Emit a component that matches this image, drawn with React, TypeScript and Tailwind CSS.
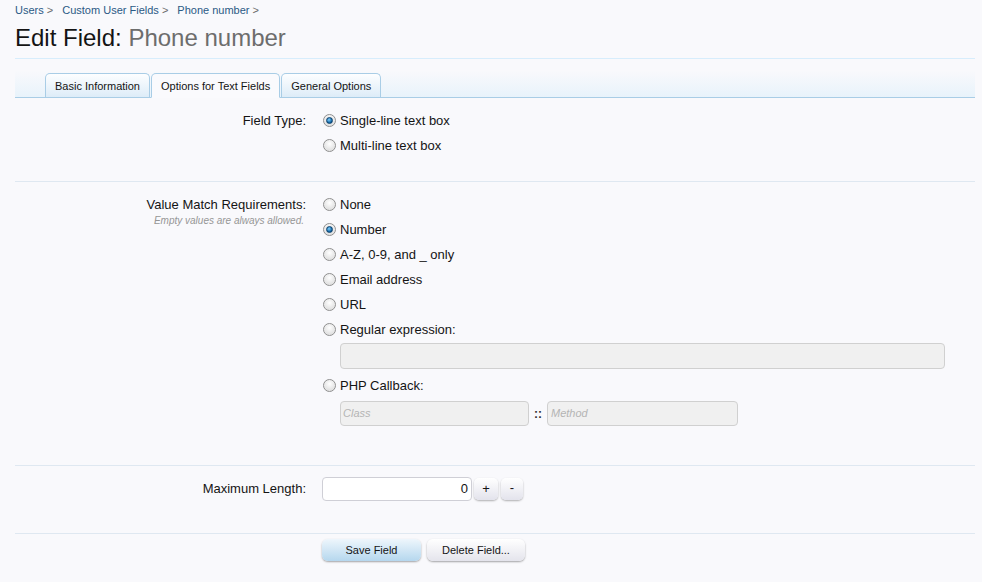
import React from 'react'

const font = { fontFamily: '"Liberation Sans", Arial, sans-serif' }

const crumbs = ['Users', 'Custom User Fields', 'Phone number']
const tabs = [
  { name: 'Basic Information', active: false },
  { name: 'Options for Text Fields', active: true },
  { name: 'General Options', active: false },
]
const matchOptions = ['None', 'Number', 'A-Z, 0-9, and _ only', 'Email address', 'URL']

const Radio = ({ checked }: { checked?: boolean }) => (
  <span className="relative inline-flex items-center justify-center w-[13px] h-[13px] mr-[4px] rounded-full border border-[#8f8f8f] bg-[radial-gradient(circle_at_50%_35%,#ffffff,#d4d4d4)] shadow-[inset_0_0_1px_#fff]">
    {checked && (
      <span className="w-[7px] h-[7px] rounded-full bg-[radial-gradient(circle_at_40%_35%,#7fd0ff,#0a5d9c_70%)] border border-[#0b3f6b]" />
    )}
  </span>
)

const RadioLine = ({ label, checked }: { label: string; checked?: boolean }) => (
  <label className="flex items-center h-[25px] text-[13px] text-[#141414]">
    <Radio checked={checked} />
    {label}
  </label>
)

const Row = ({ label, hint, children }: { label: string; hint?: string; children: React.ReactNode }) => (
  <div className="grid grid-cols-[292px_1fr] gap-x-[16px]">
    <div className="text-right pr-[1px]">
      <div className="h-[25px] leading-[25px] text-[13px] text-[#141414]">{label}</div>
      {hint && <div className="text-[10px] italic text-[#969696] -mt-[4px] pr-[2px]">{hint}</div>}
    </div>
    <div>{children}</div>
  </div>
)

export default function App() {
  return (
    <div className="min-h-[582px] bg-[#f9f9fc] pl-[15px] pr-[7px] pt-[3px]" style={font}>
      {/* breadcrumb */}
      <div className="flex gap-[9px] text-[11px] text-[#2b5a85] h-[15px] leading-[15px]">
        {crumbs.map((c) => (
          <span key={c}>{c} <span className="text-[#6b6b6b]">&gt;</span></span>
        ))}
      </div>
      <h1 className="h-[40px] leading-[40px] text-[24px] text-[#141414]">
        Edit Field: <span className="text-[#6d6d6d]">Phone number</span>
      </h1>

      {/* tabs */}
      <div className="border-t border-[#d7edfc] h-[40px] bg-[linear-gradient(to_bottom,#f9f9fc_30%,#e8f3fb)] border-b border-b-[#a9cde6] flex items-end pl-[30px]">
        {tabs.map((t) => (
          <div
            key={t.name}
            className={
              t.active
                ? 'h-[25px] -mb-[1px] px-[9px] leading-[24px] text-[11px] text-[#141414] bg-[#fafafd] border border-[#a9cde6] border-b-[#fafafd] rounded-t-[5px] mr-[1px]'
                : 'h-[24px] px-[9px] leading-[24px] text-[11px] text-[#141414] bg-[linear-gradient(to_bottom,#fdfeff,#ddecf8)] border border-b-0 border-[#a9cde6] rounded-t-[5px] mr-[1px]'
            }
          >
            {t.name}
          </div>
        ))}
      </div>

      {/* field type */}
      <div className="pt-[10px] pb-[23px] border-b border-[#dfe8f1]">
        <Row label="Field Type:">
          <RadioLine label="Single-line text box" checked />
          <RadioLine label="Multi-line text box" />
        </Row>
      </div>

      {/* value match */}
      <div className="pt-[10px] pb-[39px] border-b border-[#dfe8f1]">
        <Row label="Value Match Requirements:" hint="Empty values are always allowed.">
          {matchOptions.map((o) => (
            <RadioLine key={o} label={o} checked={o === 'Number'} />
          ))}
          <RadioLine label="Regular expression:" />
          <div className="ml-[17px] mt-[1px] w-[605px] h-[26px] rounded-[4px] border border-[#d0d0d0] bg-[#f0f0f0]" />
          <div className="mt-[4px]">
            <RadioLine label="PHP Callback:" />
          </div>
          <div className="ml-[17px] mt-[3px] flex items-center">
            <div className="w-[189px] h-[25px] rounded-[4px] border border-[#d0d0d0] bg-[#f0f0f0] text-[11px] italic text-[#b4b4b4] leading-[23px] pl-[2px]">Class</div>
            <span className="w-[18px] text-center text-[12px] font-bold text-[#333]">::</span>
            <div className="w-[191px] h-[25px] rounded-[4px] border border-[#d0d0d0] bg-[#f0f0f0] text-[11px] italic text-[#b4b4b4] leading-[23px] pl-[3px]">Method</div>
          </div>
        </Row>
      </div>

      {/* max length */}
      <div className="pt-[11px] pb-[32px] border-b border-[#dfe8f1]">
        <div className="grid grid-cols-[292px_1fr] gap-x-[15px] items-center">
          <div className="text-right text-[13px] text-[#141414] pr-[1px]">Maximum Length:</div>
          <div className="flex items-center">
            <div className="w-[150px] h-[24px] rounded-[4px] border border-[#cfcfd6] bg-white text-right pr-[3px] text-[13px] leading-[22px] text-[#141414]">0</div>
            <div className="ml-[2px] w-[24px] h-[22px] rounded-[5px] bg-[linear-gradient(to_bottom,#ffffff,#e3e3ec)] shadow-[0_1px_2px_rgba(0,0,0,0.3)] text-center text-[13px] leading-[22px] text-[#141414]">+</div>
            <div className="ml-[3px] w-[22px] h-[22px] rounded-[5px] bg-[linear-gradient(to_bottom,#ffffff,#e3e3ec)] shadow-[0_1px_2px_rgba(0,0,0,0.3)] text-center text-[13px] leading-[20px] text-[#141414]">-</div>
          </div>
        </div>
      </div>

      {/* buttons */}
      <div className="pt-[5px] pl-[307px] flex gap-[6px]">
        <div className="w-[99px] h-[22px] rounded-[6px] bg-[linear-gradient(to_bottom,#eef6fc,#b5d7ee)] shadow-[0_1px_2px_rgba(0,0,0,0.35)] text-center text-[11px] leading-[22px] text-[#141414]">Save Field</div>
        <div className="w-[98px] h-[22px] rounded-[6px] bg-[linear-gradient(to_bottom,#ffffff,#e4e4ec)] shadow-[0_1px_2px_rgba(0,0,0,0.35)] text-center text-[11px] leading-[22px] text-[#141414]">Delete Field...</div>
      </div>
    </div>
  )
}
